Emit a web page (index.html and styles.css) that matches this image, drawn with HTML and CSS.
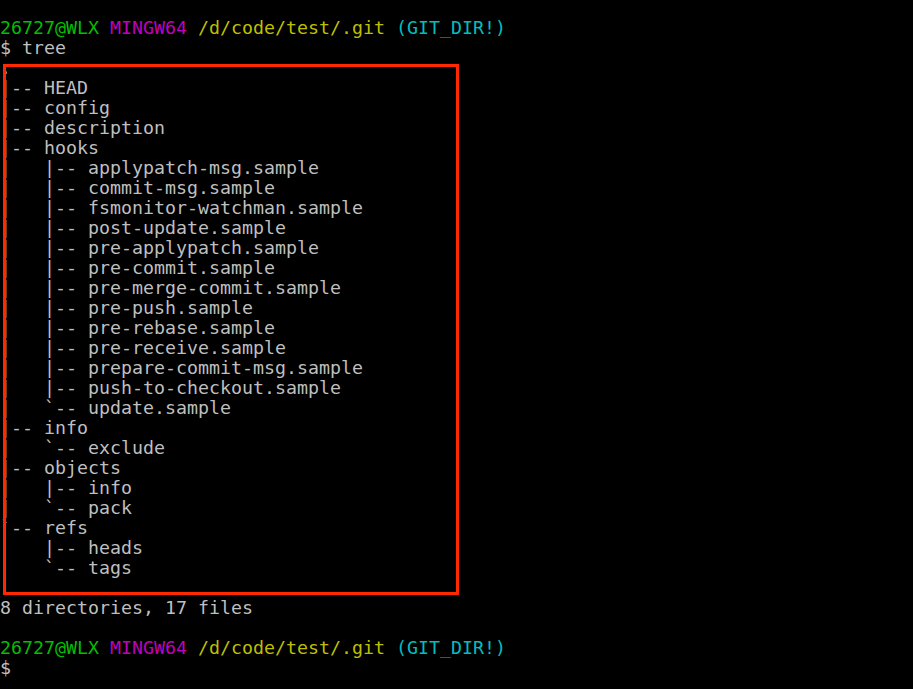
FILE: index.html
```html
<!DOCTYPE html>
<html>
<head>
<meta charset="utf-8">
<link rel="stylesheet" href="styles.css">
</head>
<body>
<div class="term">
<pre class="out"><span class="g">26727@WLX</span> <span class="m">MINGW64</span> <span class="y">/d/code/test/.git</span> <span class="c">(GIT_DIR!)</span>
$ tree
.
|-- HEAD
|-- config
|-- description
|-- hooks
|   |-- applypatch-msg.sample
|   |-- commit-msg.sample
|   |-- fsmonitor-watchman.sample
|   |-- post-update.sample
|   |-- pre-applypatch.sample
|   |-- pre-commit.sample
|   |-- pre-merge-commit.sample
|   |-- pre-push.sample
|   |-- pre-rebase.sample
|   |-- pre-receive.sample
|   |-- prepare-commit-msg.sample
|   |-- push-to-checkout.sample
|   `-- update.sample
|-- info
|   `-- exclude
|-- objects
|   |-- info
|   `-- pack
`-- refs
    |-- heads
    `-- tags

8 directories, 17 files

<span class="g">26727@WLX</span> <span class="m">MINGW64</span> <span class="y">/d/code/test/.git</span> <span class="c">(GIT_DIR!)</span>
$
</pre>
<div class="highlight"></div>
</div>
</body>
</html>
```
FILE: styles.css
```css
html, body {
  margin: 0;
  padding: 0;
  background: #000;
  height: 100%;
}
body {
  overflow: hidden;
}
.term {
  position: relative;
  padding-top: 18px;
}
.out {
  margin: 0;
  font-family: "DejaVu Sans Mono", monospace;
  font-size: 18.27px;
  line-height: 20px;
  color: #bfbfbf;
}
.g { color: #00bf00; }
.m { color: #bf00bf; }
.y { color: #bfbf00; }
.c { color: #00bfbf; }
.highlight {
  position: absolute;
  left: 3px;
  top: 64px;
  width: 450px;
  height: 525px;
  border: 3px solid #ff2800;
}
```
